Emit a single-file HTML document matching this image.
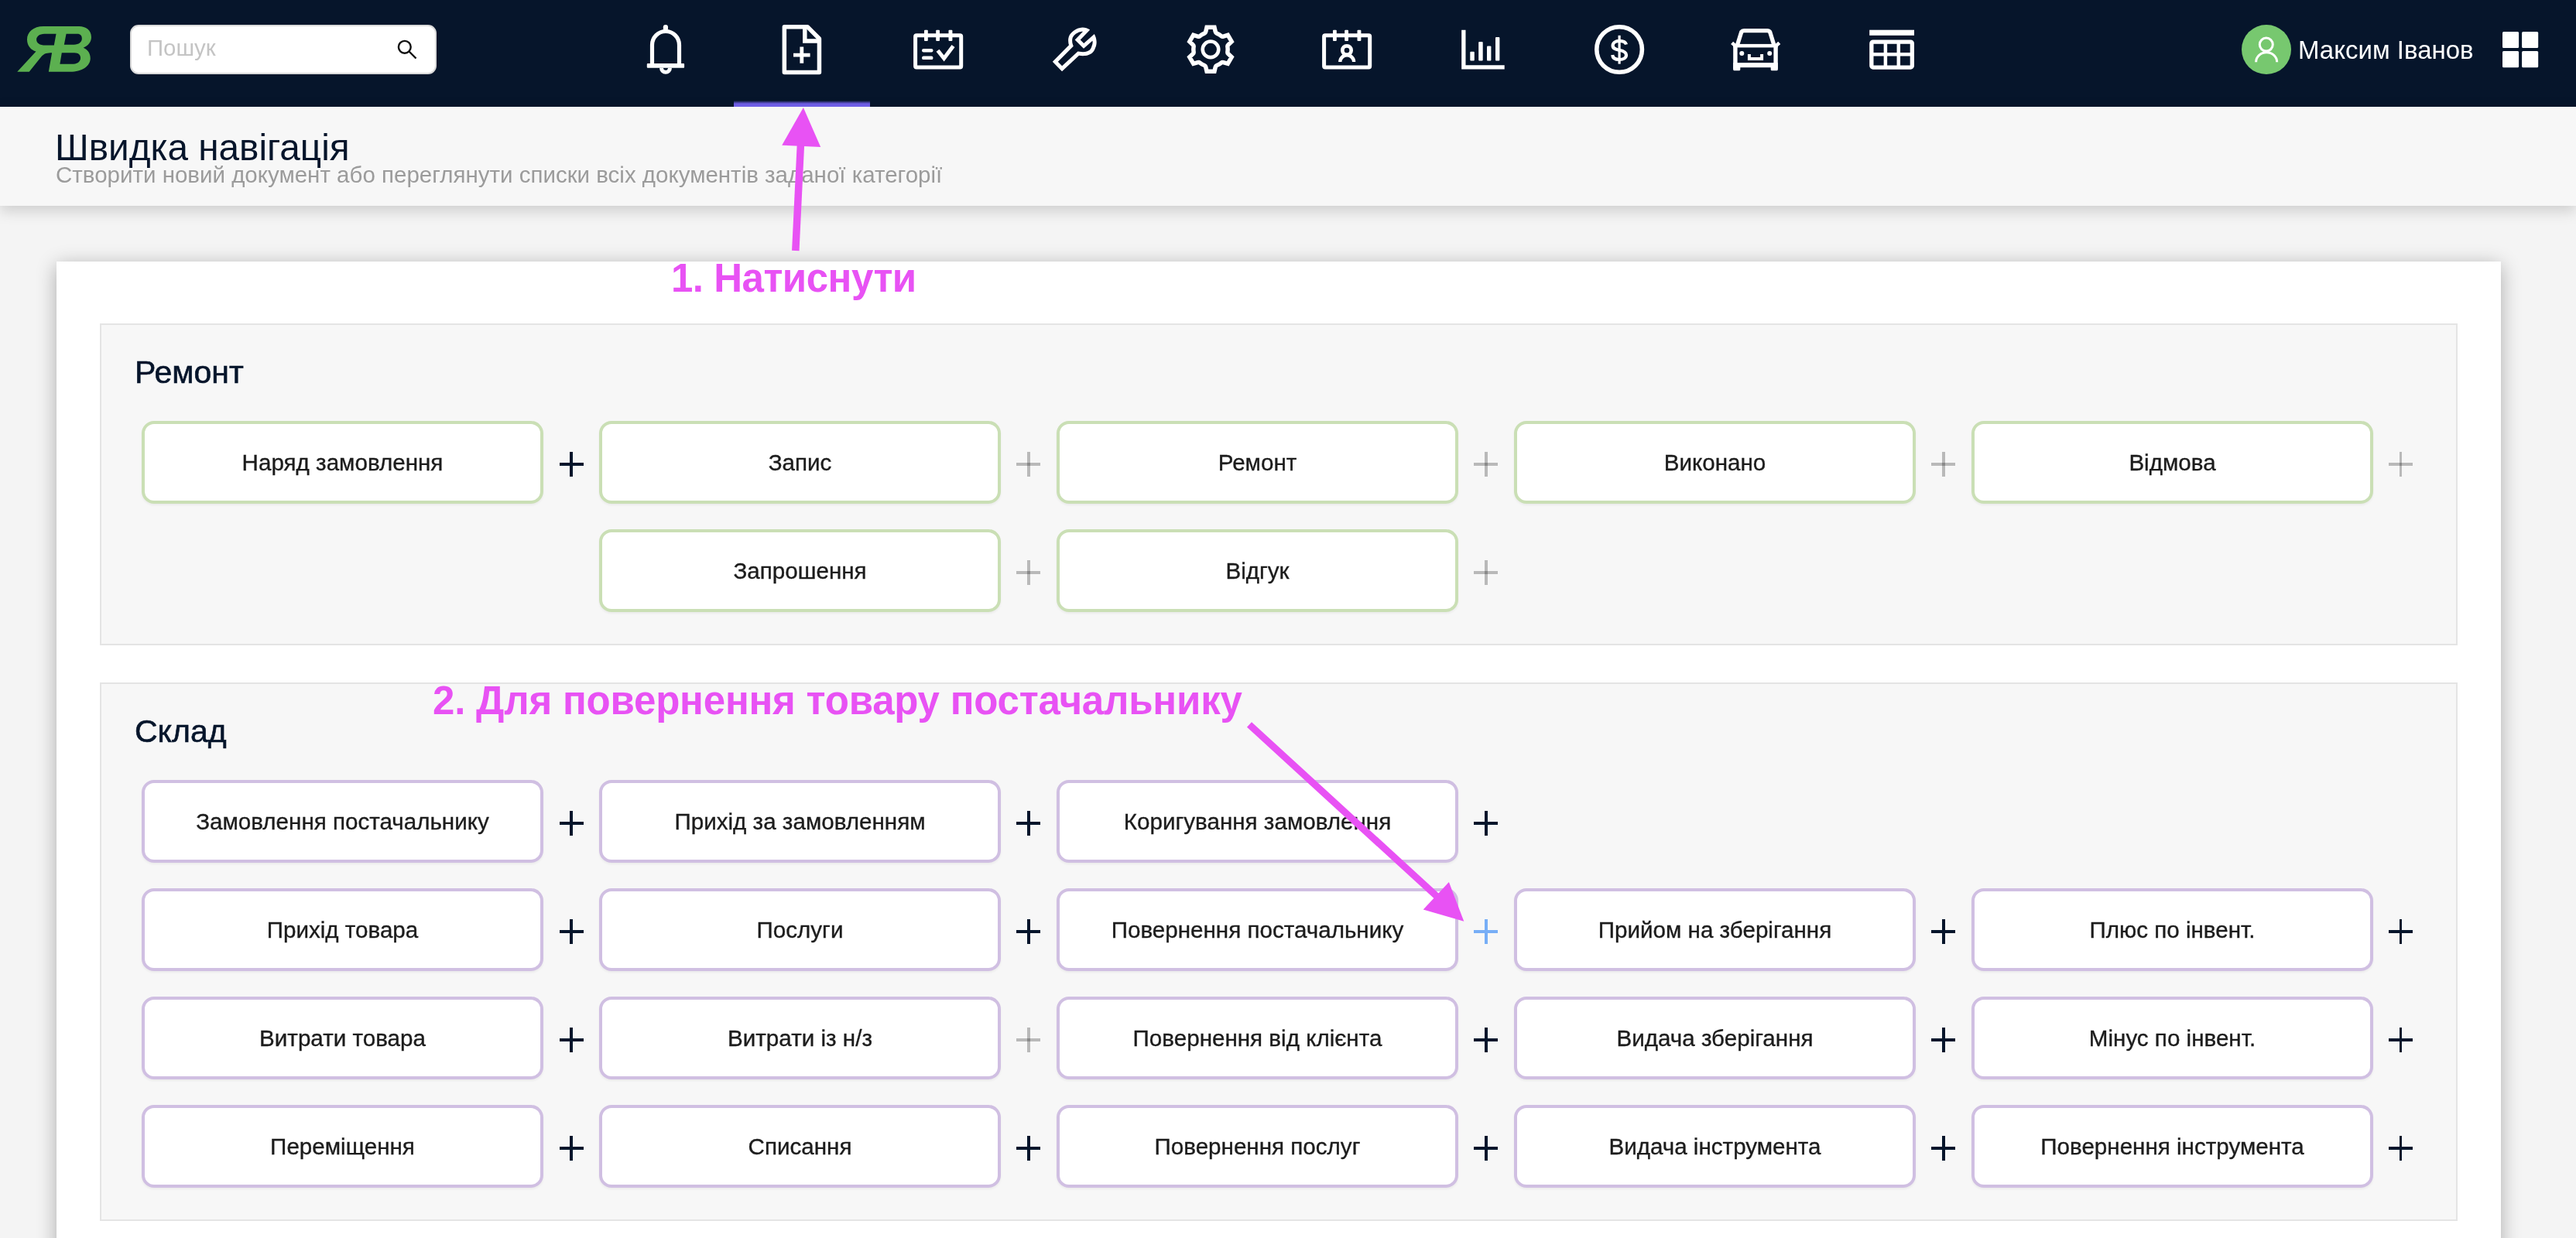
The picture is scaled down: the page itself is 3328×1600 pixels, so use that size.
<!DOCTYPE html>
<html><head><meta charset="utf-8">
<style>
*{box-sizing:border-box;margin:0;padding:0}
html,body{width:3328px;height:1600px;overflow:hidden}
body{background:#f4f4f4;font-family:"Liberation Sans",sans-serif;position:relative}
.abs{position:absolute}
#hdr{left:0;top:0;width:3328px;height:138px;background:#06152b}
#search{left:168px;top:32px;width:396px;height:64px;background:#fff;border:2px solid #dadada;border-radius:11px}
#ph{left:189.5px;top:45px;font-size:29.4px;line-height:34px;color:#c4c4c4}
#tabline{left:948px;top:130px;width:176px;height:8px;background:linear-gradient(to bottom,rgba(116,98,239,0) 0px,rgba(116,98,239,.85) 3.5px,#7462ef 5px)}
#name{left:2969px;top:45px;font-size:33px;line-height:40px;color:#fff;white-space:nowrap}
#phdr{left:0;top:138px;width:3328px;height:128px;background:#f7f7f7;box-shadow:0 6px 18px rgba(0,0,0,.17)}
#title{left:71px;top:162.5px;font-size:47.7px;line-height:56px;color:#06152b;white-space:nowrap}
#sub{left:72px;top:209px;font-size:29.5px;line-height:34px;color:#9b9b9b;white-space:nowrap}
#card{left:73px;top:338px;width:3158px;height:1400px;background:#fff;box-shadow:0 5px 24px rgba(0,0,0,.3)}
.sec{left:129px;width:3046px;background:#f7f7f7;border:2px solid #e4e4e4}
.h2{font-size:41px;line-height:48px;color:#06152b;white-space:nowrap;left:173.5px;margin-top:-1.5px;-webkit-text-stroke:0.6px #06152b}
.btn{width:519px;height:107px;background:#fff;border:4px solid #cadfb5;border-radius:16px;box-shadow:0 2px 3px rgba(0,0,0,.05);display:flex;align-items:center;justify-content:center;font-size:29.6px;color:#1c1c1c;white-space:nowrap;padding-top:0.6px;-webkit-text-stroke:0.35px #1c1c1c}
.btn.p{border-color:#d0bfe2}
.pl{width:31px;height:32px}
.pl i,.pl b{position:absolute;display:block}
.pl i{left:0;top:14.3px;width:31px;height:3.4px}
.pl b{left:13.8px;top:0;width:3.6px;height:32px}
.pl.d i,.pl.d b{background:#06152b}
.pl.g i,.pl.g b{background:rgba(0,0,0,.25)}
.pl.b i,.pl.b b{background:#77aef6}
.ann{color:#e852f4;font-weight:bold;font-size:51px;line-height:60px;white-space:nowrap;letter-spacing:-0.5px}
#ph,#name,#title,#sub,.h2,.btn,.ann{will-change:transform}
</style></head><body>
<div id="hdr" class="abs"></div>
<!-- logo -->
<svg class="abs" style="left:15px;top:25px" width="110" height="75" viewBox="0 0 1816 1238">
<path fill="#5cb050" fill-rule="evenodd" d="M120 1120 L375 1120 L640 790 C700 720 760 712 860 712 L790 1120 L1250 1120 C1500 1120 1680 1000 1680 830 C1680 700 1600 630 1530 605 C1640 560 1700 480 1700 380 C1700 230 1580 150 1440 150 L680 150 C460 150 330 280 330 430 C330 570 420 660 520 685 Z M950 310 L700 310 C590 310 530 370 530 435 C530 510 600 555 720 555 L905 555 Z M1165 310 L1400 310 C1470 310 1500 350 1500 410 C1500 490 1430 540 1330 540 L1120 540 Z M1070 712 L1340 712 C1430 712 1470 760 1470 820 C1470 910 1390 955 1280 955 L1030 955 Z"/>
</svg>
<div id="search" class="abs"></div>
<div id="ph" class="abs">Пошук</div>
<svg class="abs" style="left:505px;top:44px" width="40" height="40" viewBox="505 44 40 40">
<circle cx="522.8" cy="60.8" r="7.9" fill="none" stroke="#111" stroke-width="2.4"/>
<line x1="528.5" y1="66.5" x2="537.5" y2="75.5" stroke="#111" stroke-width="2.4"/>
</svg>
<div id="tabline" class="abs"></div>
<!--ICONS--><svg class="abs" style="left:0;top:0" width="3328" height="138" viewBox="0 0 3328 138">
<defs><clipPath id="cw"><path d="M1359.8 79.8 L1372.0 92.2 L1394.0 71.8 C1397 72.3 1399.5 72.3 1401.9 72.1 C1405 71.6 1408 70.6 1410.4 69.0 C1412.6 67.2 1414 65 1414.9 62.2 C1416.2 59.4 1416.8 56.5 1416.6 53.7 C1416.4 50 1415.4 46.8 1413.8 43.9 L1400.2 56.0 L1395.7 51.5 L1408.2 38.5 C1405.2 36.3 1402 35.4 1398.5 35.4 C1394 35.6 1390 37.2 1386.7 39.9 C1383.8 42.2 1381.8 44.4 1381.0 47.0 C1380.2 49.2 1380 51.5 1380.2 53.7 C1380.2 55.3 1380.5 56.8 1381.0 58.3 Z"/></clipPath><clipPath id="cg"><path d="M1555.00 40.59 L1556.89 32.50 L1571.11 32.50 L1573.00 40.59 A24.9 24.9 0 0 1 1579.60 44.39 L1587.55 41.99 L1594.66 54.31 L1588.61 59.99 A24.9 24.9 0 0 1 1588.61 67.61 L1594.66 73.29 L1587.55 85.61 L1579.60 83.21 A24.9 24.9 0 0 1 1573.00 87.01 L1571.11 95.10 L1556.89 95.10 L1555.00 87.01 A24.9 24.9 0 0 1 1548.40 83.21 L1540.45 85.61 L1533.34 73.29 L1539.39 67.61 A24.9 24.9 0 0 1 1539.39 59.99 L1533.34 54.31 L1540.45 41.99 L1548.40 44.39 A24.9 24.9 0 0 1 1555.00 40.59 Z"/></clipPath></defs>
<g fill="none" stroke="#fff">
<!-- bell -->
<path d="M842.5 84 V58 A17.5 17.5 0 0 1 877.5 58 V84" stroke-width="5.2"/>
<rect x="835.8" y="82" width="48.3" height="5.8" rx="1" fill="#fff" stroke="none"/>
<path d="M854.5 87.8 A5.5 5.5 0 0 0 865.5 87.8" stroke-width="5"/>
<rect x="856.8" y="32" width="6.2" height="8" rx="3" fill="#fff" stroke="none"/>
<!-- doc -->
<path d="M1013.35 34.65 H1043.15 L1058.45 49.95 V93.45 H1013.35 Z" stroke-width="5.5" stroke-linejoin="round"/>
<path d="M1039.8 34.65 V52.9 H1058.45" stroke-width="5.5"/>
<path d="M1025 71.1 H1046.6 M1035.8 60.4 V81.8" stroke-width="4.8"/>
<!-- calendar check -->
<rect x="1182.6" y="45.7" width="59.1" height="41.3" rx="1.5" stroke-width="5"/>
<g fill="#fff" stroke="none"><rect x="1194" y="38.7" width="4.8" height="14.4" rx="1"/><rect x="1209.2" y="38.7" width="4.8" height="14.4" rx="1"/><rect x="1225.5" y="38.7" width="4.9" height="14.4" rx="1"/>
<rect x="1191" y="62.9" width="14.5" height="4.6" rx="2.2"/><rect x="1191" y="72.5" width="14.5" height="4.6" rx="2.2"/></g>
<path d="M1211.5 65.2 L1219.6 75.5 L1231.5 59.6" stroke-width="5"/>
<!-- wrench -->
<path d="M1359.8 79.8 L1372.0 92.2 L1394.0 71.8 C1397 72.3 1399.5 72.3 1401.9 72.1 C1405 71.6 1408 70.6 1410.4 69.0 C1412.6 67.2 1414 65 1414.9 62.2 C1416.2 59.4 1416.8 56.5 1416.6 53.7 C1416.4 50 1415.4 46.8 1413.8 43.9 L1400.2 56.0 L1395.7 51.5 L1408.2 38.5 C1405.2 36.3 1402 35.4 1398.5 35.4 C1394 35.6 1390 37.2 1386.7 39.9 C1383.8 42.2 1381.8 44.4 1381.0 47.0 C1380.2 49.2 1380 51.5 1380.2 53.7 C1380.2 55.3 1380.5 56.8 1381.0 58.3 Z" stroke-width="10" clip-path="url(#cw)"/>
<!-- gear -->
<path d="M1555.00 40.59 L1556.89 32.50 L1571.11 32.50 L1573.00 40.59 A24.9 24.9 0 0 1 1579.60 44.39 L1587.55 41.99 L1594.66 54.31 L1588.61 59.99 A24.9 24.9 0 0 1 1588.61 67.61 L1594.66 73.29 L1587.55 85.61 L1579.60 83.21 A24.9 24.9 0 0 1 1573.00 87.01 L1571.11 95.10 L1556.89 95.10 L1555.00 87.01 A24.9 24.9 0 0 1 1548.40 83.21 L1540.45 85.61 L1533.34 73.29 L1539.39 67.61 A24.9 24.9 0 0 1 1539.39 59.99 L1533.34 54.31 L1540.45 41.99 L1548.40 44.39 A24.9 24.9 0 0 1 1555.00 40.59 Z" stroke-width="11" stroke-linejoin="round" clip-path="url(#cg)"/>
<circle cx="1564" cy="63.8" r="10.3" stroke-width="4.6"/>
<!-- calendar person -->
<rect x="1710.6" y="45.7" width="59.1" height="41.3" rx="1.5" stroke-width="5"/>
<g fill="#fff" stroke="none"><rect x="1722" y="38.7" width="4.8" height="14.4" rx="1"/><rect x="1737.2" y="38.7" width="4.8" height="14.4" rx="1"/><rect x="1753.5" y="38.7" width="4.9" height="14.4" rx="1"/></g>
<circle cx="1740" cy="65" r="5.7" stroke-width="4.7"/>
<path d="M1731.3 80.1 A8.9 8.9 0 0 1 1749.1 80.1" stroke-width="4.4"/>
<!-- chart -->
<path d="M1890.85 38.7 V86.85 H1943.7" stroke-width="5.3"/>
<g fill="#fff" stroke="none"><rect x="1899.3" y="66.7" width="5.5" height="11.7" rx="1"/><rect x="1910.2" y="54.1" width="5.5" height="24.3" rx="1"/><rect x="1921" y="59.6" width="5.4" height="18.8" rx="1"/><rect x="1932" y="48.1" width="5.4" height="30.3" rx="1"/></g>
<!-- dollar -->
<circle cx="2092.1" cy="64" r="29.3" stroke-width="5.6"/>
<path d="M2101 57.5 C2100 54 2096.5 52.8 2092.2 52.8 C2087 52.8 2083.6 55.5 2083.6 59 C2083.6 63 2087.5 63.8 2092 64.8 C2097 65.8 2101 67 2101 71 C2101 75 2097 77 2092 77 C2087 77 2083.5 75 2083.2 71" stroke-width="4.2"/><path d="M2092.1 45.8 V82.6" stroke-width="3.2"/>
<!-- car -->
<path d="M2244.1 59.5 L2249.8 41.2 Q2250.8 39.7 2253 39.7 H2283.4 Q2285.6 39.7 2286.6 41.2 L2292.3 59.5" stroke-width="5.3"/>
<rect x="2239.2" y="56.9" width="57.6" height="4.5" fill="#fff" stroke="none"/>
<path d="M2241.9 57.5 V89.5 M2294.1 57.5 V89.5" stroke-width="5.4"/>
<rect x="2239.2" y="81.1" width="57.6" height="6.1" fill="#fff" stroke="none"/>
<rect x="2239.2" y="86" width="9.1" height="5.2" rx="1.5" fill="#fff" stroke="none"/>
<rect x="2287.7" y="86" width="9.1" height="5.2" rx="1.5" fill="#fff" stroke="none"/>
<path d="M2237.6 55.3 L2243 60.2 M2298.8 55.3 L2293.4 60.2" stroke-width="4.5"/>
<circle cx="2250.3" cy="69" r="3" fill="#fff" stroke="none"/><circle cx="2286.2" cy="69" r="3" fill="#fff" stroke="none"/>
<path d="M2259.9 70 V75.9 H2276.1 V70" stroke-width="4"/>
<!-- table -->
<rect x="2415.2" y="38.7" width="57.8" height="7.1" fill="#fff" stroke="none"/>
<rect x="2417.85" y="54.15" width="52.5" height="32.9" rx="2" stroke-width="5.3"/>
<path d="M2435.9 54 V87 M2452.8 54 V87 M2418 70.25 H2470" stroke-width="4.5"/>
</g>
<!-- avatar -->
<circle cx="2928" cy="64" r="32" fill="#77c86f"/>
<circle cx="2927.8" cy="57.6" r="8.5" fill="none" stroke="#fff" stroke-width="3"/>
<path d="M2914.6 80.3 A13.5 12.5 0 0 1 2941.7 80.3" fill="none" stroke="#fff" stroke-width="3"/>
<!-- grid -->
<g fill="#fff"><rect x="3233" y="40.9" width="21.1" height="21.1" rx="1.5"/><rect x="3258.1" y="40.9" width="21.1" height="21.1" rx="1.5"/><rect x="3233" y="66.1" width="21.1" height="21.1" rx="1.5"/><rect x="3258.1" y="66.1" width="21.1" height="21.1" rx="1.5"/></g>
</svg><!--/ICONS-->
<div id="name" class="abs">Максим Іванов</div>
<div id="phdr" class="abs"></div>
<div id="title" class="abs">Швидка навігація</div>
<div id="sub" class="abs">Створити новий документ або переглянути списки всіх документів заданої категорії</div>
<div id="card" class="abs"></div>
<div class="abs sec" style="top:418px;height:416px"></div>
<div class="abs sec" style="top:882px;height:696px"></div>
<div class="abs h2" style="top:458px">Ремонт</div>
<div class="abs h2" style="top:922px">Склад</div>
<!--BUTTONS-->
<div class="abs btn" style="left:183.0px;top:544px">Наряд замовлення</div>
<div class="abs pl d" style="left:722.5px;top:584px"><i></i><b></b></div>
<div class="abs btn" style="left:773.9px;top:544px">Запис</div>
<div class="abs pl g" style="left:1313.4px;top:584px"><i></i><b></b></div>
<div class="abs btn" style="left:1364.8px;top:544px">Ремонт</div>
<div class="abs pl g" style="left:1904.3px;top:584px"><i></i><b></b></div>
<div class="abs btn" style="left:1955.7px;top:544px">Виконано</div>
<div class="abs pl g" style="left:2495.2px;top:584px"><i></i><b></b></div>
<div class="abs btn" style="left:2546.6px;top:544px">Відмова</div>
<div class="abs pl g" style="left:3086.1px;top:584px"><i></i><b></b></div>
<div class="abs btn" style="left:773.9px;top:684px">Запрошення</div>
<div class="abs pl g" style="left:1313.4px;top:724px"><i></i><b></b></div>
<div class="abs btn" style="left:1364.8px;top:684px">Відгук</div>
<div class="abs pl g" style="left:1904.3px;top:724px"><i></i><b></b></div>
<div class="abs btn p" style="left:183.0px;top:1008px">Замовлення постачальнику</div>
<div class="abs pl d" style="left:722.5px;top:1048px"><i></i><b></b></div>
<div class="abs btn p" style="left:773.9px;top:1008px">Прихід за замовленням</div>
<div class="abs pl d" style="left:1313.4px;top:1048px"><i></i><b></b></div>
<div class="abs btn p" style="left:1364.8px;top:1008px">Коригування замовлення</div>
<div class="abs pl d" style="left:1904.3px;top:1048px"><i></i><b></b></div>
<div class="abs btn p" style="left:183.0px;top:1148px">Прихід товара</div>
<div class="abs pl d" style="left:722.5px;top:1188px"><i></i><b></b></div>
<div class="abs btn p" style="left:773.9px;top:1148px">Послуги</div>
<div class="abs pl d" style="left:1313.4px;top:1188px"><i></i><b></b></div>
<div class="abs btn p" style="left:1364.8px;top:1148px">Повернення постачальнику</div>
<div class="abs pl b" style="left:1904.3px;top:1188px"><i></i><b></b></div>
<div class="abs btn p" style="left:1955.7px;top:1148px">Прийом на зберігання</div>
<div class="abs pl d" style="left:2495.2px;top:1188px"><i></i><b></b></div>
<div class="abs btn p" style="left:2546.6px;top:1148px">Плюс по інвент.</div>
<div class="abs pl d" style="left:3086.1px;top:1188px"><i></i><b></b></div>
<div class="abs btn p" style="left:183.0px;top:1288px">Витрати товара</div>
<div class="abs pl d" style="left:722.5px;top:1328px"><i></i><b></b></div>
<div class="abs btn p" style="left:773.9px;top:1288px">Витрати із н/з</div>
<div class="abs pl g" style="left:1313.4px;top:1328px"><i></i><b></b></div>
<div class="abs btn p" style="left:1364.8px;top:1288px">Повернення від клієнта</div>
<div class="abs pl d" style="left:1904.3px;top:1328px"><i></i><b></b></div>
<div class="abs btn p" style="left:1955.7px;top:1288px">Видача зберігання</div>
<div class="abs pl d" style="left:2495.2px;top:1328px"><i></i><b></b></div>
<div class="abs btn p" style="left:2546.6px;top:1288px">Мінус по інвент.</div>
<div class="abs pl d" style="left:3086.1px;top:1328px"><i></i><b></b></div>
<div class="abs btn p" style="left:183.0px;top:1428px">Переміщення</div>
<div class="abs pl d" style="left:722.5px;top:1468px"><i></i><b></b></div>
<div class="abs btn p" style="left:773.9px;top:1428px">Списання</div>
<div class="abs pl d" style="left:1313.4px;top:1468px"><i></i><b></b></div>
<div class="abs btn p" style="left:1364.8px;top:1428px">Повернення послуг</div>
<div class="abs pl d" style="left:1904.3px;top:1468px"><i></i><b></b></div>
<div class="abs btn p" style="left:1955.7px;top:1428px">Видача інструмента</div>
<div class="abs pl d" style="left:2495.2px;top:1468px"><i></i><b></b></div>
<div class="abs btn p" style="left:2546.6px;top:1428px">Повернення інструмента</div>
<div class="abs pl d" style="left:3086.1px;top:1468px"><i></i><b></b></div>
<!--/BUTTONS-->
<!--ANN--><svg class="abs" style="left:0;top:0" width="3328" height="1600" viewBox="0 0 3328 1600">
<g fill="#e852f4"><path d="M1032.54 324.33 L1039.24 185.23 L1029.76 184.77 L1023.06 323.87 Z"/><path d="M1037.9 139 L1060.2 190 L1010.2 187.7 Z"/><path d="M1610.96 939.82 L1854.96 1163.32 L1861.04 1156.68 L1617.04 933.18 Z"/><path d="M1891.3 1190.8 L1838.7 1175.6 L1871.9 1140 Z"/></g>
</svg>
<div class="abs ann" style="left:867px;top:330px">1. Натиснути</div>
<div class="abs ann" style="left:559px;top:876px;letter-spacing:-0.2px">2. Для повернення товару постачальнику</div><!--/ANN-->
</body></html>
